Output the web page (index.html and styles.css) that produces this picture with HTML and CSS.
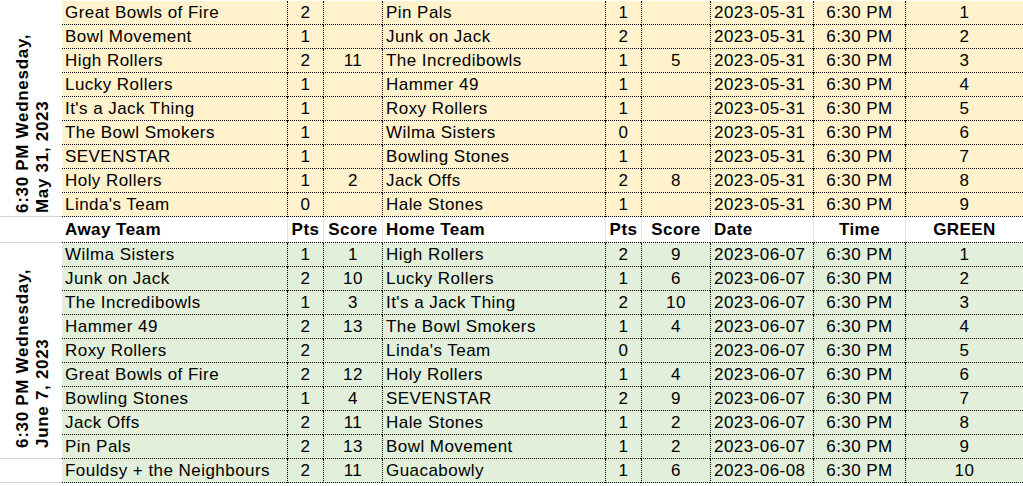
FILE: index.html
```html
<!DOCTYPE html>
<html lang="en">
<head>
<meta charset="utf-8">
<title>Bowling Schedule</title>
<link rel="stylesheet" href="styles.css">
</head>
<body>
<div class="sheet">
  <div class="section may">
    <div class="label label-may"><div class="rot"><span class="ln">6:30 PM Wednesday,</span><span class="ln">May 31, 2023</span></div></div>
    <div class="row"><div class="c">Great Bowls of Fire</div><div class="c sep ctr">2</div><div class="c sep ctr"></div><div class="c sep">Pin Pals</div><div class="c sep ctr">1</div><div class="c sep ctr"></div><div class="c sep">2023-05-31</div><div class="c sep ctr">6:30 PM</div><div class="c sep ctr">1</div></div>
    <div class="row"><div class="c">Bowl Movement</div><div class="c sep ctr">1</div><div class="c sep ctr"></div><div class="c sep">Junk on Jack</div><div class="c sep ctr">2</div><div class="c sep ctr"></div><div class="c sep">2023-05-31</div><div class="c sep ctr">6:30 PM</div><div class="c sep ctr">2</div></div>
    <div class="row"><div class="c">High Rollers</div><div class="c sep ctr">2</div><div class="c sep ctr">11</div><div class="c sep">The Incredibowls</div><div class="c sep ctr">1</div><div class="c sep ctr">5</div><div class="c sep">2023-05-31</div><div class="c sep ctr">6:30 PM</div><div class="c sep ctr">3</div></div>
    <div class="row"><div class="c">Lucky Rollers</div><div class="c sep ctr">1</div><div class="c sep ctr"></div><div class="c sep">Hammer 49</div><div class="c sep ctr">1</div><div class="c sep ctr"></div><div class="c sep">2023-05-31</div><div class="c sep ctr">6:30 PM</div><div class="c sep ctr">4</div></div>
    <div class="row"><div class="c">It's a Jack Thing</div><div class="c sep ctr">1</div><div class="c sep ctr"></div><div class="c sep">Roxy Rollers</div><div class="c sep ctr">1</div><div class="c sep ctr"></div><div class="c sep">2023-05-31</div><div class="c sep ctr">6:30 PM</div><div class="c sep ctr">5</div></div>
    <div class="row"><div class="c">The Bowl Smokers</div><div class="c sep ctr">1</div><div class="c sep ctr"></div><div class="c sep">Wilma Sisters</div><div class="c sep ctr">0</div><div class="c sep ctr"></div><div class="c sep">2023-05-31</div><div class="c sep ctr">6:30 PM</div><div class="c sep ctr">6</div></div>
    <div class="row"><div class="c">SEVENSTAR</div><div class="c sep ctr">1</div><div class="c sep ctr"></div><div class="c sep">Bowling Stones</div><div class="c sep ctr">1</div><div class="c sep ctr"></div><div class="c sep">2023-05-31</div><div class="c sep ctr">6:30 PM</div><div class="c sep ctr">7</div></div>
    <div class="row"><div class="c">Holy Rollers</div><div class="c sep ctr">1</div><div class="c sep ctr">2</div><div class="c sep">Jack Offs</div><div class="c sep ctr">2</div><div class="c sep ctr">8</div><div class="c sep">2023-05-31</div><div class="c sep ctr">6:30 PM</div><div class="c sep ctr">8</div></div>
    <div class="row"><div class="c">Linda's Team</div><div class="c sep ctr">0</div><div class="c sep ctr"></div><div class="c sep">Hale Stones</div><div class="c sep ctr">1</div><div class="c sep ctr"></div><div class="c sep">2023-05-31</div><div class="c sep ctr">6:30 PM</div><div class="c sep ctr">9</div></div>
  </div>

  <div class="row head">
    <div class="blank"></div>
    <div class="hd">Away Team</div><div class="hd gsep ctr">Pts</div><div class="hd gsep ctr">Score</div><div class="hd gsep">Home Team</div><div class="hd gsep ctr">Pts</div><div class="hd gsep ctr">Score</div><div class="hd gsep">Date</div><div class="hd gsep ctr">Time</div><div class="hd gsep ctr">GREEN</div>
  </div>

  <div class="section jun">
    <div class="label label-jun"><div class="rot"><span class="ln">6:30 PM Wednesday,</span><span class="ln">June 7, 2023</span></div></div>
    <div class="row"><div class="c">Wilma Sisters</div><div class="c sep ctr">1</div><div class="c sep ctr">1</div><div class="c sep">High Rollers</div><div class="c sep ctr">2</div><div class="c sep ctr">9</div><div class="c sep">2023-06-07</div><div class="c sep ctr">6:30 PM</div><div class="c sep ctr">1</div></div>
    <div class="row"><div class="c">Junk on Jack</div><div class="c sep ctr">2</div><div class="c sep ctr">10</div><div class="c sep">Lucky Rollers</div><div class="c sep ctr">1</div><div class="c sep ctr">6</div><div class="c sep">2023-06-07</div><div class="c sep ctr">6:30 PM</div><div class="c sep ctr">2</div></div>
    <div class="row"><div class="c">The Incredibowls</div><div class="c sep ctr">1</div><div class="c sep ctr">3</div><div class="c sep">It's a Jack Thing</div><div class="c sep ctr">2</div><div class="c sep ctr">10</div><div class="c sep">2023-06-07</div><div class="c sep ctr">6:30 PM</div><div class="c sep ctr">3</div></div>
    <div class="row"><div class="c">Hammer 49</div><div class="c sep ctr">2</div><div class="c sep ctr">13</div><div class="c sep">The Bowl Smokers</div><div class="c sep ctr">1</div><div class="c sep ctr">4</div><div class="c sep">2023-06-07</div><div class="c sep ctr">6:30 PM</div><div class="c sep ctr">4</div></div>
    <div class="row"><div class="c">Roxy Rollers</div><div class="c sep ctr">2</div><div class="c sep ctr"></div><div class="c sep">Linda's Team</div><div class="c sep ctr">0</div><div class="c sep ctr"></div><div class="c sep">2023-06-07</div><div class="c sep ctr">6:30 PM</div><div class="c sep ctr">5</div></div>
    <div class="row"><div class="c">Great Bowls of Fire</div><div class="c sep ctr">2</div><div class="c sep ctr">12</div><div class="c sep">Holy Rollers</div><div class="c sep ctr">1</div><div class="c sep ctr">4</div><div class="c sep">2023-06-07</div><div class="c sep ctr">6:30 PM</div><div class="c sep ctr">6</div></div>
    <div class="row"><div class="c">Bowling Stones</div><div class="c sep ctr">1</div><div class="c sep ctr">4</div><div class="c sep">SEVENSTAR</div><div class="c sep ctr">2</div><div class="c sep ctr">9</div><div class="c sep">2023-06-07</div><div class="c sep ctr">6:30 PM</div><div class="c sep ctr">7</div></div>
    <div class="row"><div class="c">Jack Offs</div><div class="c sep ctr">2</div><div class="c sep ctr">11</div><div class="c sep">Hale Stones</div><div class="c sep ctr">1</div><div class="c sep ctr">2</div><div class="c sep">2023-06-07</div><div class="c sep ctr">6:30 PM</div><div class="c sep ctr">8</div></div>
    <div class="row"><div class="c">Pin Pals</div><div class="c sep ctr">2</div><div class="c sep ctr">13</div><div class="c sep">Bowl Movement</div><div class="c sep ctr">1</div><div class="c sep ctr">2</div><div class="c sep">2023-06-07</div><div class="c sep ctr">6:30 PM</div><div class="c sep ctr">9</div></div>
    <div class="row"><div class="blank"></div><div class="c">Fouldsy + the Neighbours</div><div class="c sep ctr">2</div><div class="c sep ctr">11</div><div class="c sep">Guacabowly</div><div class="c sep ctr">1</div><div class="c sep ctr">6</div><div class="c sep">2023-06-08</div><div class="c sep ctr">6:30 PM</div><div class="c sep ctr">10</div></div>
  </div>
</div>
</body>
</html>
```

FILE: styles.css
```css
html, body {
  margin: 0;
  background: #ffffff;
}

body {
  padding-top: 1px;
  font-family: "Liberation Sans", Arial, sans-serif;
  font-size: 17px;
  letter-spacing: 0.45px;
  color: #000000;
  overflow: hidden;
}

.sheet {
  display: grid;
  grid-template-columns: 62px 225px 36px 59px 223px 36px 69px 103px 92px 1fr;
  grid-template-rows: repeat(9, 24px) 26px repeat(10, 24px);
}

.section,
.row {
  display: contents;
}

.c {
  box-sizing: border-box;
  border-bottom: 1px dotted #000000;
  padding: 2px 3px 0 3px;
  line-height: 20px;
  white-space: nowrap;
  overflow: hidden;
}

.may .c {
  background: #fff2cc;
}

.jun .c {
  background: #e2efda;
}

.sep {
  border-left: 1px dotted #000000;
}

.ctr {
  text-align: center;
  padding-left: 0;
  padding-right: 0;
}

.hd {
  box-sizing: border-box;
  background: #ffffff;
  font-weight: bold;
  border-bottom: 1px dotted #000000;
  padding: 1px 3px 0 3px;
  line-height: 24px;
  white-space: nowrap;
  overflow: hidden;
}

.hd.ctr {
  padding-left: 0;
  padding-right: 0;
}

.gsep {
  border-left: 1px solid #e4e4e4;
}

.blank {
  box-sizing: border-box;
  background: #ffffff;
  border-bottom: 1px solid #d4d4d4;
}

.label {
  grid-column: 1;
  box-sizing: border-box;
  background: #ffffff;
  border-bottom: 1px solid #d4d4d4;
  display: flex;
  align-items: stretch;
  padding-left: 13px;
  font-weight: bold;
  letter-spacing: 0.7px;
  overflow: hidden;
}

.label-may {
  grid-row: 1 / 10;
  padding-bottom: 3px;
}

.label-jun {
  grid-row: 11 / 20;
  padding-bottom: 10px;
}

.rot {
  writing-mode: vertical-rl;
  text-orientation: sideways;
  transform: rotate(180deg);
  line-height: 20px;
  white-space: nowrap;
  text-align: start;
}

.ln {
  display: block;
}
```
